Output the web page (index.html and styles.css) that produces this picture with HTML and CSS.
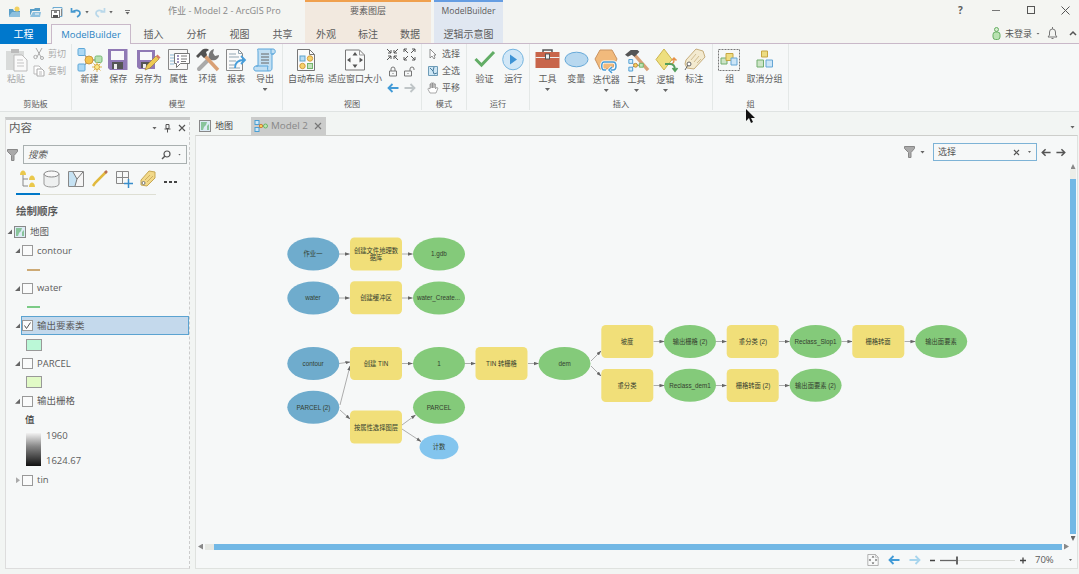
FILE: index.html
```html
<!DOCTYPE html>
<html lang="zh-CN">
<head>
<meta charset="utf-8">
<title>作业 - Model 2 - ArcGIS Pro</title>
<link rel="stylesheet" href="styles.css">
</head>
<body>
<svg class="defs" width="0" height="0">
  <defs>
    <marker id="tip" viewBox="0 0 6 4" refX="5.5" refY="2" markerWidth="5" markerHeight="4" markerUnits="userSpaceOnUse" orient="auto"><path d="M0 0L6 2L0 4Z" fill="#666"/></marker>
    <symbol id="map" viewBox="0 0 12 12"><rect x=".5" y=".5" width="11" height="11" fill="#dcebf4" stroke="#888"/><path d="M2 2h6l-1 3-2 2-1 3H2zM8 6l2-2v6H8z" fill="#88c49b"/></symbol>
    <symbol id="flow" viewBox="0 0 14 12"><path d="M3 3l4 3-4 3M7 6h4" stroke="#777" fill="none"/><rect x="1" y="0.5" width="4" height="4" fill="#cfe8f8" stroke="#4a9fd4"/><rect x="1" y="7.500" width="4" height="4" fill="#cfe8f8" stroke="#4a9fd4"/><circle cx="7" cy="6" r="1.700" fill="#f4d45a" stroke="#c9803f"/><circle cx="11.500" cy="6" r="2" fill="#bfe3b4" stroke="#69b766"/></symbol>
    <symbol id="funnel" viewBox="0 0 11 12"><path d="M.5.5h10v2L7 6.500v5H4.500v-5L.5 2.500z" fill="#aaa" stroke="#888"/></symbol>
    <symbol id="left" viewBox="0 0 12 10"><path d="M11.500 5H1.500M5.500 1L1.500 5l4 4" fill="none" stroke="currentColor" stroke-width="1.800"/></symbol>
    <symbol id="right" viewBox="0 0 12 10"><path d="M.5 5h10M6.500 1l4 4-4 4" fill="none" stroke="currentColor" stroke-width="1.800"/></symbol>
    <symbol id="fit" viewBox="0 0 22 22"><path d="M1.500 1h14l5 5v15h-19z" fill="#f9fafa" stroke="#777"/><path d="M15.500 1v5h5" fill="none" stroke="#999"/><path d="M11 3l2.500 3.500h-5zM11 19l2.500-3.500h-5zM3 11l3.500-2.500v5zM19 11l-3.500-2.500v5z" fill="#555"/></symbol>
  </defs>
</svg>

<header class="top">
  <div class="quick">
    <svg width="13" height="12" viewBox="0 0 13 12"><path d="M1 3h4l1 2h6v6H1z" fill="#5a9fc8"/><path d="M1 10L4 6h8v5H1z" fill="#8dc0de"/><circle cx="9" cy="3" r="2.500" fill="#f1d061"/></svg>
    <svg width="13" height="12" viewBox="0 0 13 12"><path d="M1 3h4l1-1h5v3H3l-2 5z" fill="#5a9fc8"/><path d="M1 11l3-5h8l-1 5z" fill="#8dc0de"/><path d="M6 8h4" stroke="#f8f8f8"/></svg>
    <svg width="14" height="13" viewBox="0 0 14 13"><path d="M3 3V1.500h9v9h-2" fill="none" stroke="#6eabd2"/><rect x="1.500" y="4.500" width="8" height="7" fill="#fff" stroke="#777"/><path d="M3 9h5v3H3z" fill="#555"/><path d="M4 5h3v2H4zM11 3h1v7h-1z" fill="#888"/></svg>
    <svg class="undo" width="12" height="11" viewBox="0 0 12 11"><path d="M1.500 1v4h4M2 5c5-3 8-1 8 1s-1 3-3 4" fill="none" stroke="#4598cf" stroke-width="1.700"/></svg>
    <i class="down"></i>
    <svg class="redo" width="12" height="11" viewBox="0 0 12 11"><path d="M10.500 1v4h-4M10 5C5 2 2 4 2 6s1 3 3 4" fill="none" stroke="#b9d8ea" stroke-width="1.700"/></svg>
    <i class="down"></i>
    <div class="over"><i class="down"></i></div>
  </div>
  <div class="app-title">作业 - Model 2 - ArcGIS Pro</div>
  <div class="window-buttons">
    <b>?</b>
    <svg width="9" height="9"><path d="M0 4.500h8" stroke="#777"/></svg>
    <svg width="9" height="9"><rect x=".5" y=".5" width="7" height="7" fill="none" stroke="#555"/></svg>
    <svg width="9" height="9"><path d="M.5.5l8 8M8.500.5l-8 8" stroke="#555"/></svg>
  </div>
  <nav class="tabs">
    <span class="tab file">工程</span>
    <span class="tab active">ModelBuilder</span>
    <span class="tab">插入</span><span class="tab">分析</span><span class="tab">视图</span><span class="tab">共享</span>
  </nav>
  <div class="context feature"><span>要素图层</span><div><span>外观</span><span>标注</span><span>数据</span></div></div>
  <div class="context diagram"><span>ModelBuilder</span><div><span>逻辑示意图</span></div></div>
  <div class="account">
    <svg width="9" height="13" viewBox="0 0 9 13"><circle cx="4.500" cy="2.500" r="2" fill="#d5edcf" stroke="#66ae62"/><rect x="1" y="5" width="7" height="7.500" rx="2.500" fill="#b9e2b2" stroke="#66ae62"/></svg>
    <span>未登录</span><i class="down"></i>
    <svg class="bell" width="11" height="13" viewBox="0 0 11 13"><path d="M1 10h9L8.500 8V5a3 3 0 0 0-6 0v3zM4.500 11.500h2M5.500 0v2" fill="none" stroke="#777"/></svg>
    <svg width="8" height="5"><path d="M1 4l3-3 3 3" fill="none" stroke="#555" stroke-width="1.500"/></svg>
  </div>
</header>

<section class="ribbon">
  <div class="group g-clip"><div class="tools">
    <div class="tool muted w30"><svg width="23" height="24" viewBox="0 0 23 24"><path d="M1 3h18v19H1z" fill="#d9dbda"/><path d="M6 1h8v4H6z" fill="#bbb"/><path d="M9 7h8l5 5v11H9z" fill="#fafafa" stroke="#bbb"/><path d="M12 12h6M12 15h7M12 18h7" stroke="#c5c5c5"/></svg><span>粘贴</span></div>
    <div class="stack muted clip-stack">
      <div><svg width="12" height="12" viewBox="0 0 12 12"><path d="M3 0l5 9M9 0L4 9" stroke="#aaa" fill="none"/><circle cx="2.500" cy="9" r="1.700" fill="none" stroke="#aaa"/><circle cx="9" cy="10" r="1.500" fill="none" stroke="#aaa"/></svg>剪切</div>
      <div><svg width="12" height="12" viewBox="0 0 12 12"><path d="M1 1h5l2 2v6H1z" fill="#fff" stroke="#bbb"/><path d="M4 4h5l2 2v5H4z" fill="#fff" stroke="#aaa"/><path d="M6 7h3M6 9h3" stroke="#bbb"/></svg>复制</div>
    </div></div><footer>剪贴板</footer></div>

  <div class="group g-model"><div class="tools">
    <div class="tool w29"><svg width="26" height="24" viewBox="0 0 26 24"><path d="M5 4l7 8-7 8M12 12h7" stroke="#666" fill="none"/><rect x="1" y="0.500" width="7" height="7" rx="1" fill="#acd8f4" stroke="#5ea8d8"/><rect x="1" y="16" width="7" height="7" rx="1" fill="#acd8f4" stroke="#5ea8d8"/><circle cx="12" cy="12" r="4" fill="#f4c34e" stroke="#cd983c"/><rect x="18" y="8" width="7" height="6.500" rx="1.500" fill="#b8e1b4" stroke="#74b873"/><path d="M20 14v10M15 19h10M16.500 15.500l7 7M23.500 15.500l-7 7" stroke="#dfb453"/><circle cx="20" cy="19" r="2.500" fill="#fbe888" stroke="#d8a73e"/></svg><span>新建</span></div>
    <div class="tool w28"><svg width="22" height="24" viewBox="0 0 22 24"><path d="M1 1h19.500v21H3l-2-2z" fill="#9079b5"/><path d="M4 3h13v9H4z" fill="#f8f8fa"/><path d="M5 14h11v7H5z" fill="#555"/><path d="M7 16h3v5H7z" fill="#eee"/></svg><span>保存</span></div>
    <div class="tool w32"><svg width="24" height="24" viewBox="0 0 24 24"><path d="M1 2h18v19H3l-2-2z" fill="#9079b5"/><path d="M4 4h12v8H4z" fill="#f8f8fa"/><path d="M5 14h10v6H5z" fill="#555"/><path d="M7 16h3v4H7z" fill="#eee"/><path d="M9 22l2-5L20 8l3 3-9 9z" fill="#edc952" stroke="#9f8340" stroke-width=".7"/><path d="M20 8l1.500-1.500 3 3L23 11z" fill="#d77b66"/></svg><span>另存为</span></div>
    <div class="tool w29"><svg width="23" height="24" viewBox="0 0 23 24"><path d="M1.500 1.500h19v20h-19z" fill="#f8f8f8" stroke="#888"/><path d="M3 7h4M3 10h4M3 13h4M3 16h4" stroke="#8ab7d5"/><path d="M7.500 5.500h15v10h-9l-4 4v-4h-2z" fill="#fff" stroke="#777"/><path d="M10 8h2M10 11h2M10 14h2" stroke="#806fa8" stroke-width="1.500"/><path d="M14 8h6M14 11h6M14 13.500h5" stroke="#777"/></svg><span>属性</span></div>
    <div class="tool w29"><svg width="24" height="24" viewBox="0 0 24 24"><path d="M3 21l12-12" stroke="#aaa" stroke-width="4" stroke-linecap="round"/><path d="M13 10c-1-4 1-8 5-9l-1 4 2 3 4-1c0 4-4 6-8 5z" fill="#777"/><path d="M8 7l14 15" stroke="#d9a075" stroke-width="3.500"/><path d="M0 8l6-6c3-2 6-1 7 0l-3 2 1 3-3 3-3-3-3 3z" fill="#505050"/></svg><span>环境</span></div>
    <div class="tool w28"><svg width="23" height="24" viewBox="0 0 23 24"><path d="M1.500 1.500h12l4 4v17h-16z" fill="#fafafa" stroke="#888"/><path d="M13.500 1.500v4h4M4 6h7M4 9h10M4 13h7M4 17h6M4 20h11" stroke="#91a5b2" fill="none"/><path d="M10 20c0-6 3-8 9-8M16 8l4 4-4 4" stroke="#479edb" stroke-width="1.800" fill="none"/></svg><span>报表</span></div>
    <div class="tool w29"><svg width="24" height="24" viewBox="0 0 24 24"><path d="M5 1h15c3 0 3 5 0 5h-1v14c0 2-1 3-3 3H3c-3 0-3-5 0-5h2V4c0-2-1-3 0-3z" fill="#c1dff3" stroke="#5aa6db"/><path d="M8 6h8M8 9h8M8 12h8M8 15h8" stroke="#666"/><path d="M3 18h12c-1 3 0 4 0 5M18 1v5h3" stroke="#5aa6db" fill="none"/></svg><span>导出</span><i class="down"></i></div>
  </div><footer>模型</footer></div>

  <div class="group g-view"><div class="tools">
    <div class="tool w44"><svg width="22" height="24" viewBox="0 0 22 24"><path d="M2.500 1.500h12l5 5v16h-17z" fill="#fafafa" stroke="#777"/><path d="M14.500 1.500v5h5" stroke="#777" fill="none"/><rect x="5" y="8" width="5" height="5" fill="#b9ddf4" stroke="#5ca1c9"/><circle cx="15" cy="10.500" r="2.700" fill="#f5d36d" stroke="#d69c3b"/><circle cx="7.500" cy="18" r="2.700" fill="#f5d36d" stroke="#d69c3b"/><rect x="12.500" y="15.500" width="5" height="5" fill="#c3e2bd" stroke="#74b56e"/></svg><span>自动布局</span></div>
    <div class="tool w54"><svg width="22" height="24" viewBox="0 0 22 22"><use href="#fit"/></svg><span>适应窗口大小</span></div>
    <div class="view-grid">
      <svg width="13" height="13" viewBox="0 0 13 13"><path d="M1 1l4 4M2 5h3V2M12 1L8 5M8 2v3h3M1 12l4-4M2 8h3v3M12 12L8 8M11 8H8v3" stroke="#555" fill="none"/></svg>
      <svg width="13" height="13" viewBox="0 0 13 13"><path d="M1 1l4 4M1 4V1h3M12 1L8 5M9 1h3v3M1 12l4-4M1 9v3h3M12 12L8 8M9 12h3V9" stroke="#555" fill="none"/></svg>
      <svg width="10" height="11" viewBox="0 0 10 11"><path d="M1.500 5h7v5h-7zM3 5V3a2 2 0 0 1 4 0v2M5 7v1" stroke="#777" fill="none"/></svg>
      <svg width="11" height="11" viewBox="0 0 11 11"><path d="M.5 5h7v5h-7zM6 5V3a2 2 0 0 1 4 0v1M4 7v1" stroke="#777" fill="none"/></svg>
      <svg class="blue" width="12" height="10"><use href="#left"/></svg><svg class="pale" width="12" height="10"><use href="#right"/></svg>
    </div>
  </div><footer>视图</footer></div>

  <div class="group g-mode"><div class="tools"><div class="stack">
    <div><svg width="12" height="12" viewBox="0 0 12 12"><path d="M3 1v9l2-2 2 3 1-1-1-3h2z" fill="#fff" stroke="#777" stroke-width=".8"/></svg>选择</div>
    <div><svg width="12" height="12" viewBox="0 0 12 12"><path d="M1.500 1.500h9v9h-9z" fill="#cde6f5" stroke="#6e9cb7"/><path d="M3 3l3 3 1-4M6 6l1 3 3-1" stroke="#477b9c" fill="none"/></svg>全选</div>
    <div><svg width="12" height="12" viewBox="0 0 12 12"><path d="M3 11L.8 7l1-1L3 7V2h1v4-5h1.500v5-5H7v5-4h1.500v5l1-1.500 1.500.5-2 5z" fill="#fff" stroke="#888" stroke-width=".7"/></svg>平移</div>
  </div></div><footer>模式</footer></div>

  <div class="group g-run"><div class="tools">
    <div class="tool w29"><svg width="22" height="24" viewBox="0 0 22 24"><path d="M1.500 11l6 6L20 4" stroke="#62ad66" stroke-width="3" fill="none"/></svg><span>验证</span></div>
    <div class="tool w28"><svg width="22" height="24" viewBox="0 0 22 24"><circle cx="11" cy="11.500" r="10.300" fill="#d1e7f7" stroke="#76b5df"/><path d="M8 6.500l7 5-7 5z" fill="#3e93d5"/></svg><span>运行</span></div>
  </div><footer>运行</footer></div>

  <div class="group g-insert"><div class="tools">
    <div class="tool w29"><svg width="25" height="24" viewBox="0 0 25 24"><path d="M8 5V2h9v3" fill="none" stroke="#555" stroke-width="1.500"/><rect x=".5" y="4" width="24" height="16" fill="#c8654b"/><path d="M.5 9.500h24" stroke="#eee"/><rect x="10.500" y="6" width="4" height="5" fill="#eee" stroke="#555"/></svg><span>工具</span><i class="down"></i></div>
    <div class="tool w28"><svg width="25" height="24" viewBox="0 0 25 24"><ellipse cx="12.500" cy="11.500" rx="11.500" ry="7.300" fill="#b8d8ef" stroke="#67a9d8"/></svg><span>变量</span></div>
    <div class="tool w32 low"><svg width="24" height="24" viewBox="0 0 24 24"><path d="M6 2h12l5 9-5 10H6L1 11z" fill="#f1ba7c" stroke="#c99361"/><path d="M12 22H10c-3 0-3-8 0-8h9c4 0 4 8 0 8h-2M18 19l-3 3 3 3" fill="none" stroke="#fff" stroke-width="3"/><path d="M12 22H10c-3 0-3-8 0-8h9c4 0 4 8 0 8h-2M18 19l-3 3 3 3" fill="none" stroke="#469bd5" stroke-width="1.500"/></svg><span>迭代器</span><i class="down"></i></div>
    <div class="tool w29 low"><svg width="24" height="24" viewBox="0 0 25 25"><path d="M9 6l15 17" stroke="#d9a176" stroke-width="3.500"/><path d="M0 7l6-5h7l2 2-5 5-3-2-4 2z" fill="#555"/><path d="M6 14l4 4-4 4M10 18h5" stroke="#777" fill="none"/><path d="M4 12h4v4H4zM4 20h4v4H4z" fill="#d2ebfa" stroke="#4f9ed2"/><circle cx="11" cy="18" r="2" fill="#f5d45d" stroke="#bf863c"/><path d="M15 16h4v4h-4z" fill="#bee3b7" stroke="#72b567"/></svg><span>工具</span><i class="down"></i></div>
    <div class="tool w29 low"><svg width="24" height="24" viewBox="0 0 24 24"><path d="M10 1l8 10.500L10 22 2 11.500z" fill="#eedf7f" stroke="#cdb650"/><path d="M11 16h5c4 0 4-2 4-5M17.500 12.500l2.500-2.500 2.500 2.500" stroke="#e6924a" stroke-width="1.500" fill="none"/><path d="M11 16h5c4 0 5 2 5 6M18.500 20l2.500 3 2.500-3" stroke="#549e5b" stroke-width="1.800" fill="none"/></svg><span>逻辑</span><i class="down"></i></div>
    <div class="tool w28"><svg width="23" height="24" viewBox="0 0 23 24"><path d="M3 12L13 1l7 2 2 6-11 12-7-1-2-4z" fill="#f3ead0" stroke="#c6ae7e"/><path d="M8 12l5-6M11 14l5-6M14 15l4-4" stroke="#d1bd91"/><circle cx="6" cy="16" r="2" fill="#fff" stroke="#666"/><path d="M5 17l-3 5" stroke="#666"/></svg><span>标注</span></div>
  </div><footer>插入</footer></div>

  <div class="group g-group"><div class="tools">
    <div class="tool w32"><svg width="23" height="24" viewBox="0 0 23 24"><rect x=".5" y="1.500" width="21" height="21" fill="none" stroke="#777" stroke-dasharray="2 1"/><path d="M3 10h6v6H3z" fill="#cce4c6" stroke="#72ad6e"/><path d="M8 5.500h7v7H8z" fill="#eddc81" stroke="#c7a642"/><path d="M13 10h6v7h-6z" fill="#cce5f7" stroke="#65a6d5"/></svg><span>组</span></div>
    <div class="tool w38"><svg width="20" height="24" viewBox="0 0 20 24"><path d="M6.500 3h6v6h-6z" fill="#eddc81" stroke="#c7a642"/><path d="M2 12h6.500v7H2z" fill="#cce4c6" stroke="#72ad6e"/><path d="M11 12h6.500v7H11z" fill="#cce5f7" stroke="#65a6d5"/></svg><span>取消分组</span></div>
  </div><footer>组</footer></div>
</section>

<main class="workspace">
  <aside class="contents">
    <div class="pane-title"><span>内容</span><i class="down"></i><svg width="7" height="9" viewBox="0 0 7 9"><path d="M2 .5h3v4H2zM.5 5h6M3.500 5v3.500" stroke="#555" fill="none"/></svg><svg width="8" height="8"><path d="M1 1l6 6M7 1L1 7" stroke="#555" stroke-width="1.200"/></svg></div>
    <div class="search-row"><svg width="11" height="12"><use href="#funnel"/></svg><div class="search"><em>搜索</em><svg width="10" height="10"><circle cx="6" cy="4" r="3" fill="none" stroke="#555" stroke-width="1.200"/><path d="M4 6L1 9" stroke="#555" stroke-width="1.500"/></svg><i class="down tiny"></i></div></div>
    <div class="views">
      <svg class="current" width="24" height="21" viewBox="0 0 24 21"><path d="M7 6v11h5M7 10h5" stroke="#888" fill="none"/><path d="M4 6c0-6 6-6 6 0zM13 11c0-6 6-6 6 0zM13 18c0-6 6-6 6 0z" fill="#eac84b"/></svg>
      <svg width="24" height="21" viewBox="0 0 24 21"><path d="M4 5v10c0 4 15 4 15 0V5" fill="#eef0f0" stroke="#999"/><ellipse cx="11.500" cy="5" rx="7.500" ry="3" fill="#f8f8f8" stroke="#888"/></svg>
      <svg width="24" height="21" viewBox="0 0 24 21"><path d="M4.500 2.500h15v15h-15z" fill="#f5f5f5" stroke="#888"/><path d="M5 3h4l4 7-2 7H5z" fill="#c6e2f3"/><path d="M9 3l4 7 6-7M13 10l-2 7" fill="none" stroke="#777"/></svg>
      <svg width="24" height="21" viewBox="0 0 24 21"><path d="M5 17l2-3L18 3" stroke="#e1b93d" stroke-width="2.500" fill="none"/><path d="M17 4l2-2" stroke="#b86e53" stroke-width="2.500"/></svg>
      <svg width="24" height="21" viewBox="0 0 24 21"><path d="M4.500 2.500h12v12h-12zM10.500 2.500v12M4.500 8.500h12" stroke="#888" fill="none"/><path d="M16.500 10v9M12 14.500h9" stroke="#388dcb" stroke-width="1.500"/></svg>
      <svg width="24" height="21" viewBox="0 0 24 21"><path d="M5 11L13 2l6 1v6l-8 8-6-1z" fill="#f2d989" stroke="#c6a753"/><path d="M9 11l5-5M11 13l6-6" stroke="#cfaf61"/><circle cx="7.500" cy="14" r="1.500" fill="#fff" stroke="#777"/></svg>
      <b class="dots"><i></i><i></i><i></i></b>
    </div>
    <h2>绘制顺序</h2>
    <div class="tree">
      <div class="row root"><i class="open"></i><svg width="12" height="12"><use href="#map"/></svg><span>地图</span></div>
      <div class="row"><i class="open"></i><i class="box"></i><span>contour</span></div>
      <div class="row symbol"><i class="line brown"></i></div>
      <div class="row"><i class="open"></i><i class="box"></i><span>water</span></div>
      <div class="row symbol"><i class="line green"></i></div>
      <div class="row"><i class="open"></i><div class="selected"><i class="box"><svg width="9" height="9"><path d="M1.500 4.500l2 3 4-6" stroke="#555" fill="none"/></svg></i><span>输出要素类</span></div></div>
      <div class="row symbol"><i class="swatch mint"></i></div>
      <div class="row"><i class="open"></i><i class="box"></i><span>PARCEL</span></div>
      <div class="row symbol"><i class="swatch lime"></i></div>
      <div class="row"><i class="open"></i><i class="box"></i><span>输出栅格</span></div>
      <div class="row value">值</div>
      <div class="ramp"><i></i><div><span>1960</span><span>1624.67</span></div></div>
      <div class="row"><i class="closed"></i><i class="box"></i><span>tin</span></div>
    </div>
  </aside>

  <section class="editor">
    <div class="doc-tabs"><div class="doc"><svg width="12" height="12"><use href="#map"/></svg>地图</div><div class="doc on"><svg width="14" height="12"><use href="#flow"/></svg><span>Model 2</span><svg width="8" height="8"><path d="M1 1l6 6M7 1L1 7" stroke="#777" stroke-width="1.200"/></svg></div><i class="down"></i></div>
    <div class="view">
      <div class="stage">
        <svg class="model" viewBox="196 136 873 407" width="873" height="407">
          <g class="edges">
            <path d="M339 254h10.500"/><path d="M402 254h10.500"/><path d="M339 298h10.500"/><path d="M402 298h10.500"/>
            <path d="M339 363.500l11-1.500"/><path d="M402 363.500h10.500"/><path d="M465 363.500h10.500"/><path d="M528 363.500h10.500"/>
            <path d="M340 405L350 366"/><path d="M340 410L350 419"/><path d="M402 425L415.500 415"/><path d="M402 429L421 441.500"/>
            <path d="M591 361L601 351"/><path d="M591 366L601 376"/>
            <path d="M653.500 341.500H664"/><path d="M716 341.500h10.500"/><path d="M779 341.500h10.500"/><path d="M841.500 341.500H852"/><path d="M904.500 341.500H915"/>
            <path d="M653.500 385.500H664"/><path d="M716 385.500h10.500"/><path d="M779 385.500h10.500"/>
          </g>
          <g class="input"><ellipse cx="313.300" cy="254" rx="26" ry="16.500"/><ellipse cx="313.300" cy="298" rx="26" ry="16.500"/><ellipse cx="313.300" cy="363.500" rx="26" ry="16.500"/><ellipse cx="313.300" cy="407.300" rx="26" ry="16.500"/></g>
          <g class="process">
            <rect x="350" y="237.500" width="52" height="33" rx="4.500"/><rect x="350" y="281.300" width="52" height="33" rx="4.500"/><rect x="350" y="347" width="52" height="33" rx="4.500"/><rect x="350" y="410.500" width="52" height="33" rx="4.500"/><rect x="475.500" y="347" width="52" height="33" rx="4.500"/>
            <rect x="601.300" y="325" width="52" height="33" rx="4.500"/><rect x="601.300" y="369" width="52" height="33" rx="4.500"/><rect x="726.700" y="325" width="52" height="33" rx="4.500"/><rect x="726.700" y="369" width="52" height="33" rx="4.500"/><rect x="852.300" y="325" width="52" height="33" rx="4.500"/>
          </g>
          <g class="output">
            <ellipse cx="439" cy="254" rx="26" ry="16.500"/><ellipse cx="439" cy="298" rx="26" ry="16.500"/><ellipse cx="439" cy="363.500" rx="26" ry="16.500"/><ellipse cx="439" cy="407.300" rx="26" ry="16.500"/><ellipse cx="564.500" cy="363.500" rx="26" ry="16.500"/>
            <ellipse cx="690" cy="341.500" rx="26" ry="16.500"/><ellipse cx="690" cy="385.300" rx="26" ry="16.500"/><ellipse cx="815.600" cy="341.500" rx="26" ry="16.500"/><ellipse cx="815.600" cy="385.300" rx="26" ry="16.500"/><ellipse cx="941.200" cy="341.500" rx="26" ry="16.500"/>
          </g>
          <ellipse class="count" cx="439" cy="447" rx="19.500" ry="12.300"/>
          <g class="labels">
            <text x="313" y="256">作业一</text><text x="376" y="252.500">创建文件地理数</text><text x="376" y="260.300">据库</text><text x="439" y="256">1.gdb</text>
            <text x="313" y="300">water</text><text x="376" y="300">创建缓冲区</text><text x="438.500" y="300">water_Create...</text>
            <text x="313" y="365.500">contour</text><text x="376" y="365.500">创建 TIN</text><text x="439" y="365.500">1</text><text x="501.500" y="365.500">TIN 转栅格</text><text x="564.500" y="365.500">dem</text>
            <text x="313.500" y="409.500">PARCEL (2)</text><text x="439" y="409.500">PARCEL</text><text x="376" y="429.500">按属性选择图层</text><text x="439" y="449">计数</text>
            <text x="627" y="343.700">坡度</text><text x="690" y="343.700">输出栅格 (2)</text><text x="753" y="343.700">重分类 (2)</text><text x="815.500" y="343.700">Reclass_Slop1</text><text x="878" y="343.700">栅格转面</text><text x="941" y="343.700">输出面要素</text>
            <text x="627" y="387.500">重分类</text><text x="690" y="387.500">Reclass_dem1</text><text x="753" y="387.500">栅格转面 (2)</text><text x="815.500" y="387.500">输出面要素 (2)</text>
          </g>
        </svg>
        <div class="find"><svg width="11" height="12"><use href="#funnel"/></svg><i class="down"></i><div class="find-box"><span>选择</span><svg width="7" height="7"><path d="M1 1l5 5M6 1L1 6" stroke="#555" stroke-width="1.200"/></svg><i class="down tiny"></i></div><svg width="10" height="9"><use href="#left"/></svg><svg width="10" height="9"><use href="#right"/></svg></div>
        <div class="vscroll"><i class="up"></i><span></span><b></b><i class="down"></i></div>
      </div>
      <div class="hscroll"><i class="prev"></i><span></span><b></b><i class="next"></i></div>
      <div class="status"><svg class="fit" width="12" height="12"><use href="#fit"/></svg><svg class="blue" width="12" height="10"><use href="#left"/></svg><svg class="lightblue" width="12" height="10"><use href="#right"/></svg><svg class="slider" width="96" height="9"><path d="M0 4.500h5M90 4.500h6M93 1.500v6" stroke="#444" stroke-width="1.300"/><path d="M27 4.500h58" stroke="#d9dbd7"/><path d="M10 4.500h17" stroke="#666" stroke-width="1.300"/><path d="M27 .5v8" stroke="#666" stroke-width="2"/></svg><span>70%</span><i class="down tiny"></i></div>
    </div>
  </section>
</main>
<svg class="cursor" width="9" height="14" viewBox="0 0 9 14"><path d="M0 0v12l3-3 2 5 2-1-2-4h4z" fill="#111"/></svg>
</body>
</html>
```
FILE: styles.css
```css
* { box-sizing: border-box; }
body { margin: 0; width: 1079px; height: 574px; overflow: hidden; background: #f2f5f3; color: #5c5c5c; font: 9px/12px "Open Sans", "Noto Sans CJK SC", sans-serif; }
svg { display: block; flex: none; overflow: visible; }
i { display: block; flex: none; font-style: normal; }
.defs { position: absolute; }
.down { width: 5px; height: 3px; background: #666; clip-path: polygon(0 0, 100% 0, 50% 100%); }
.down.tiny { width: 3px; height: 2px; }

/* Title bar and ribbon tabs */
.top { position: relative; height: 44px; display: grid; grid-template: 24px 19px / 168px 1fr 128px; border-bottom: 1px solid #c9b9c9; background: #f4f5f2; }
.quick { display: flex; align-items: center; padding-left: 8px; gap: 8px; }
.undo { margin-left: -2px; }
.quick .down { margin-left: -5px; width: 4px; }
.redo { margin-left: -3px; }
.quick .over { margin-left: 4px; width: 5px; border-top: 1px solid #777; padding-top: 1px; }
.quick .over .down { margin: 0; width: 5px; }
.app-title { padding-top: 5px; font-size: 9.100px; line-height: 12px; color: #888; }
.window-buttons { display: flex; align-items: center; justify-content: space-between; padding: 0 9px 4px 7px; }
.window-buttons b { font-size: 10px; width: 9px; }
.tabs { display: flex; grid-column: 1 / 3; font-size: 10px; }
.tab { width: 43px; height: 20px; line-height: 21px; text-align: center; }
.tab.file { width: 47px; background: #0078cc; color: #fff; }
.tab.active { width: 80px; margin: 0 1px 0 4px; color: #2b84c3; background: #f6f8f8; border: 1px solid #c9b9c9; border-bottom: 0; line-height: 19px; font-size: 9.500px; }
.context { position: absolute; top: 0; height: 43px; text-align: center; font-size: 9px; }
.context > span { display: block; height: 22px; line-height: 18px; }
.context > div { display: flex; font-size: 10px; line-height: 21px; }
.context div span { flex: 1; }
.feature { left: 305px; width: 126px; border-top: 2px solid #f0a04e; background: #f2e9df; }
.diagram { left: 434px; width: 69px; border-top: 2px solid #659de2; background: #e0e7f1; }
.diagram > span { font-size: 8.600px; }
.account { grid-column: 3; display: flex; align-items: center; justify-content: flex-end; gap: 4px; white-space: nowrap; padding-right: 2px; margin-left: -10px; color: #555; }
.account .down { width: 4px; height: 2px; }
.account .bell { margin: 0 7px 0 3px; }

/* Ribbon */
.ribbon { display: flex; height: 68px; background: #f6f8f8; border-bottom: 1px solid #dfe3e2; }
.group { display: flex; flex-direction: column; height: 66px; border-right: 1px solid #e4e8e7; }
.group footer { text-align: center; font-size: 8.200px; line-height: 12px; padding-top: 2px; }
.tools { display: flex; height: 54px; padding: 4px 0 0 3px; white-space: nowrap; }
.g-clip { width: 72px; } .g-model { width: 211px; } .g-view { width: 139px; }
.g-mode { width: 45px; } .g-run { width: 63px; } .g-insert { width: 183px; } .g-group { width: 76px; }
.g-clip .tools { padding-left: 1px; }
.g-view .tools { padding-left: 1px; }
.g-group .tools { padding-left: 1px; }
.g-mode .tools { padding-left: 5px; }
.tool { display: flex; flex-direction: column; align-items: center; flex: none; }
.tool span { line-height: 13px; }
.tool .down { margin-top: 3px; }
.tool.low span { padding-top: 1px; }
.w28 { width: 28.500px; } .w29 { width: 29px; } .w30 { width: 30px; } .w32 { width: 31.500px; }
.w38 { width: 38px; } .w44 { width: 44px; } .w54 { width: 54px; }
.muted { color: #aaa; }
.stack { display: flex; flex-direction: column; gap: 5px; }
.stack div { display: flex; align-items: center; gap: 3px; height: 12px; }
.clip-stack { padding-left: 2px; }
.view-grid { display: grid; grid-template: repeat(3, 13px) / 17px 17px; row-gap: 3.500px; place-items: center; padding-left: 2px; }
.blue { color: #429bd7; } .pale { color: #bfc5c7; } .lightblue { color: #a8d5ed; }

/* Contents pane */
.workspace { display: flex; height: 462px; padding: 5px 1px 5px 5px; gap: 5px; }
.contents { width: 185px; background: #f6f8f8; border: 1px solid #ddd; border-top: 3px solid #c9cbca; border-right: 1px dashed #ccc; padding-left: 3px; }
.pane-title { display: flex; align-items: center; height: 16px; gap: 7px; padding-right: 3px; font-size: 11.500px; }
.pane-title span { flex: 1; }
.search-row { display: flex; align-items: center; gap: 5px; margin: 9px 2px 0 -2px; }
.search { display: flex; flex: 1; align-items: center; height: 19px; border: 1px solid #a9b0b0; padding: 0 5px 0 4px; gap: 7px; }
.search em { flex: 1; font-size: 9.500px; }
.views { display: flex; height: 27px; margin: 4px 0 0 7px; width: 140px; border-bottom: 1px solid #dedfd4; }
.views svg { flex: none; box-sizing: content-box; padding: 1px 0 3px; }
.views .current { border-bottom: 2px solid #0078c8; }
.dots { display: flex; gap: 2px; padding: 13px 0 0 4px; }
.dots i { width: 3px; height: 2px; background: #444; }
.contents h2 { margin: 9px 0 3.600px 7px; font-size: 10.500px; line-height: 15px; }
.tree { font-size: 9.500px; }
.row { display: flex; align-items: center; height: 18.800px; padding-left: 7px; gap: 4px; }
.row.root { padding-left: 0; margin-left: -1px; }
.open { width: 5px; height: 5px; margin-left: -1px; margin-right: -2px; background: #666; clip-path: polygon(100% 0, 100% 100%, 0 100%); }
.closed { width: 4px; height: 6px; margin-right: -2px; background: #aaa; clip-path: polygon(0 0, 100% 50%, 0 100%); }
.box { width: 11px; height: 11px; border: 1px solid #999; background: #fafbfb; }
.selected { display: flex; align-items: center; flex: 1; gap: 4px; height: 19px; margin-left: -1px; border: 1px solid #5ba3d1; background: #c4d9ec; }
.row .symbol { padding-left: 17px; }
.row.symbol { padding-left: 17px; }
.line { width: 13px; height: 2px; margin-left: 1px; opacity: .8; }
.brown { background: #c39654; } .green { background: #5dbf69; }
.swatch { width: 16px; height: 12px; border: 1px solid #999; }
.mint { background: #bbf8d7; } .lime { background: #e1fac6; }
.row.value { padding-left: 16px; font-weight: 500; color: #444; }
.ramp { display: flex; height: 41.500px; padding: 4px 0 4px 17px; gap: 5px; }
.ramp > i { width: 15px; height: 33px; background: linear-gradient(#f2f2f2, #888 40%, #111); }
.ramp div { display: flex; flex-direction: column; justify-content: space-between; height: 37px; margin-top: -3px; }

/* Model view */
.editor { flex: 1; min-width: 0; display: flex; flex-direction: column; }
.doc-tabs { display: flex; height: 18px; align-items: center; padding-right: 3px; }
.doc { display: flex; align-items: center; width: 56px; height: 18px; padding-left: 4px; gap: 4px; color: #444; }
.doc.on { width: 75px; padding-left: 3px; background: #cbcccb; color: #888; gap: 3px; font-size: 9.800px; }
.doc.on svg:last-child { margin-left: 3px; }
.doc-tabs > .down { margin-left: auto; margin-top: 2px; }
.view { flex: 1; background: #f6f8f8; border: 1px solid #dfe2df; border-top: 1px solid #cdcecb; }
.stage { position: relative; height: 407px; display: flex; }
.edges path { stroke: #999; stroke-width: .8; fill: none; marker-end: url(#tip); }
.input { fill: #6faccd; } .process { fill: #f1df79; } .output { fill: #84ca7a; } .count { fill: #83c5ee; }
.labels { font: 6.300px "Liberation Sans", "Noto Sans CJK SC", sans-serif; text-anchor: middle; fill: #34402f; }
.find { position: absolute; right: 11px; top: 7px; display: flex; align-items: center; gap: 5px; color: #555; }
.find-box { display: flex; align-items: center; width: 104px; height: 18px; margin: 0 -1px 0 3px; padding: 0 5px 0 4px; gap: 8px; border: 1px solid #7db3d6; }
.find-box span { flex: 1; }
.vscroll { display: flex; flex-direction: column; align-items: center; width: 8px; padding-top: 28px; }
.up { width: 5px; height: 5px; background: #888; clip-path: polygon(50% 0, 100% 100%, 0 100%); }
.vscroll span { width: 6px; height: 10px; background: #eceee9; }
.vscroll b { width: 6px; flex: 1; background: #72b8e5; margin-bottom: 2px; }
.vscroll .down { height: 5px; margin-bottom: 2px; }
.hscroll { display: flex; align-items: center; height: 7px; }
.prev, .next { width: 5px; height: 6px; background: #888; margin: 0 2px; clip-path: polygon(100% 0, 100% 100%, 0 50%); }
.next { margin-right: 8px; clip-path: polygon(0 0, 100% 50%, 0 100%); }
.hscroll span { width: 9px; height: 6px; background: #e5e7e2; }
.hscroll b { flex: 1; height: 6px; background: #72b8e5; }
.status { display: flex; align-items: center; justify-content: flex-end; height: 18px; gap: 9px; padding: 2px 5px 0 0; }
.status span { width: 25px; font-size: 9.500px; }
.cursor { position: absolute; left: 746px; top: 109px; }
```
